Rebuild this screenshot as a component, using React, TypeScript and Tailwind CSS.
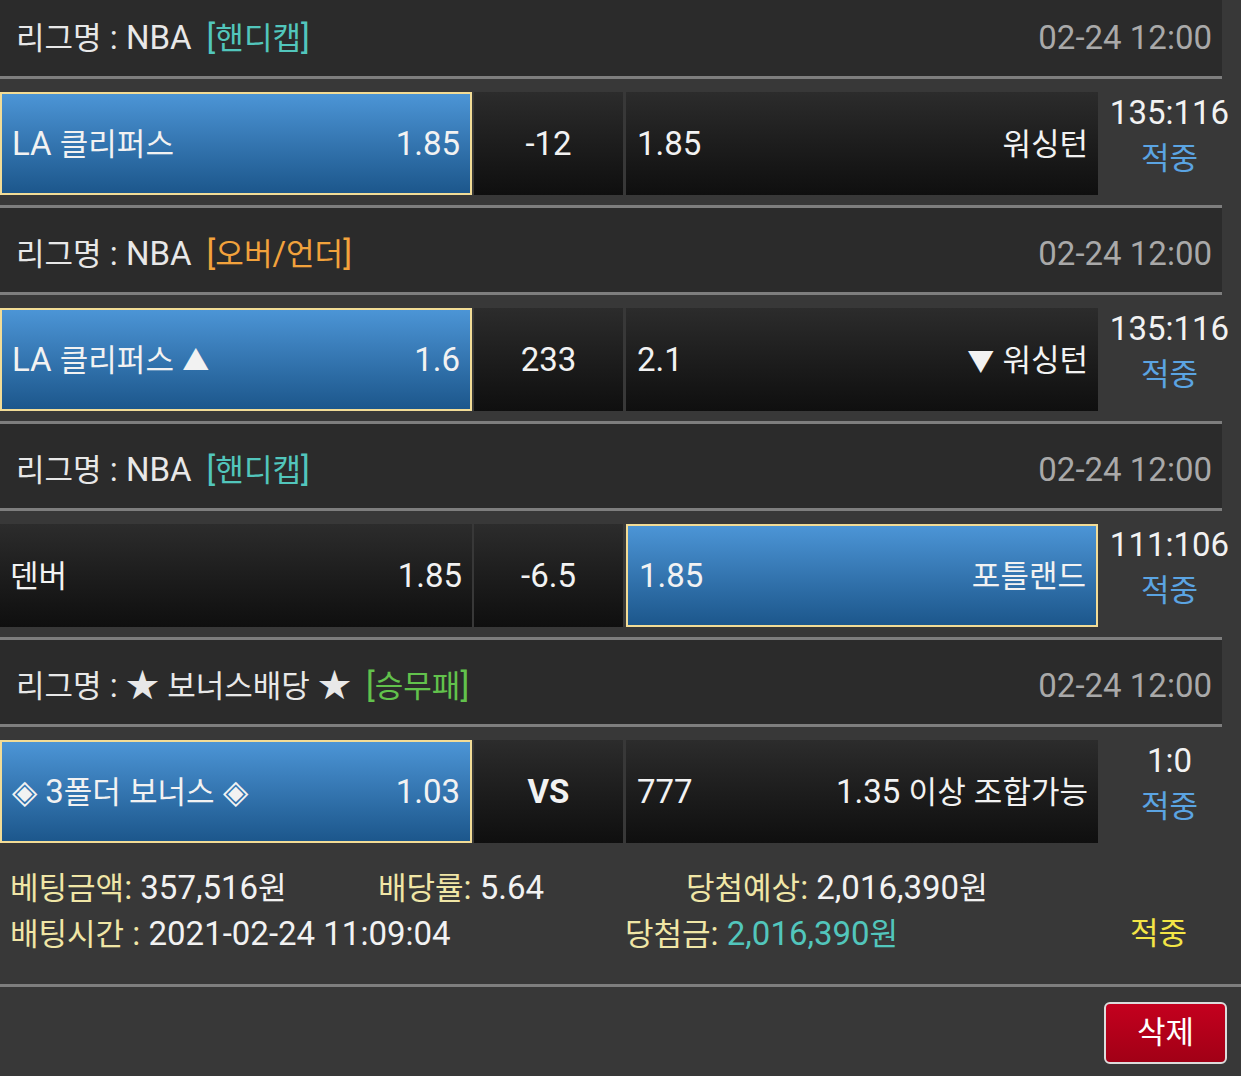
import React from "react";

const FONT = "font-['Roboto','Noto_Sans_CJK_KR',sans-serif]";

function t(s: string): React.ReactNode {
  const parts = s.split(/([\u3131-\uD79D]+|[▲▼])/);
  return parts.map((p, i) => {
    if (i % 2 === 0) return p;
    if (p === "▲" || p === "▼") return <span key={i} className="text-[27px]">{p}</span>;
    return <span key={i} className="text-[0.94em]">{p}</span>;
  });
}

function Header({ label, tag, tagColor, first }: { label: string; tag: string; tagColor: string; first?: boolean }) {
  return (
    <div className={`${first ? "-mt-[8px]" : ""} flex h-[84px] w-[1222px] items-center justify-between bg-[#2b2b2b] pl-[16px] pr-[10px] pt-[8px] text-[33px]`}>
      <div className="flex items-center text-[#e8e8e8]">
        <span>{t(label)}</span>
        <span className={`ml-[15px] ${tagColor}`}>{t(tag)}</span>
      </div>
      <span className="text-[#a9a9a9]">02-24 12:00</span>
    </div>
  );
}

function Line() {
  return <div className="h-[3px] w-[1222px] bg-[#7e7e7e]" />;
}

function Cell({ selected, left, right, className }: { selected?: boolean; left: string; right: string; className: string }) {
  const base = selected
    ? "border-2 border-[#f2dc96] bg-gradient-to-b from-[#4c95d6] to-[#1c578c]"
    : "bg-gradient-to-b from-[#2c2c2c] to-[#0f0f0f]";
  return (
    <div className={`mt-[13px] flex h-[103px] items-center justify-between text-[33px] text-[#f2f2f2] ${base} ${className}`}>
      <span>{t(left)}</span>
      <span>{t(right)}</span>
    </div>
  );
}

function Row({
  lSel,
  rSel,
  lName,
  lOdd,
  mid,
  rOdd,
  rName,
  score,
  midBold,
}: {
  lSel?: boolean;
  rSel?: boolean;
  lName: string;
  lOdd: string;
  mid: string;
  rOdd: string;
  rName: string;
  score: string;
  midBold?: boolean;
}) {
  return (
    <div className="flex h-[126px] w-full">
      <Cell selected={lSel} left={lName} right={lOdd} className="w-[472px] pl-[10px] pr-[10px]" />
      <div className={`ml-[2px] mt-[13px] flex h-[103px] w-[149px] items-center justify-center bg-gradient-to-b from-[#2c2c2c] to-[#0f0f0f] text-[33px] text-[#f2f2f2] ${midBold ? "font-bold" : ""}`}>
        {mid}
      </div>
      <Cell selected={rSel} left={rOdd} right={rName} className="ml-[3px] w-[472px] pl-[11px] pr-[10px]" />
      <div className="flex flex-1 flex-col items-center pt-[11px] text-[33px] leading-[46px]">
        <span className="text-[#f2f2f2]">{score}</span>
        <span className="text-[31px] text-[#5ba4e2]">적중</span>
      </div>
    </div>
  );
}

export default function App() {
  return (
    <div className={`${FONT} h-[1076px] w-[1241px] overflow-hidden bg-[#383838]`}>
      <Header first label="리그명 : NBA" tag="[핸디캡]" tagColor="text-[#52c6bc]" />
      <Line />
      <Row lSel lName="LA 클리퍼스" lOdd="1.85" mid="-12" rOdd="1.85" rName="워싱턴" score="135:116" />
      <Line />
      <Header label="리그명 : NBA" tag="[오버/언더]" tagColor="text-[#f2a23c]" />
      <Line />
      <Row lSel lName="LA 클리퍼스 ▲" lOdd="1.6" mid="233" rOdd="2.1" rName="▼ 워싱턴" score="135:116" />
      <Line />
      <Header label="리그명 : NBA" tag="[핸디캡]" tagColor="text-[#52c6bc]" />
      <Line />
      <Row rSel lName="덴버" lOdd="1.85" mid="-6.5" rOdd="1.85" rName="포틀랜드" score="111:106" />
      <Line />
      <Header label="리그명 : ★ 보너스배당 ★" tag="[승무패]" tagColor="text-[#62c24c]" />
      <Line />
      <Row lSel lName="◈ 3폴더 보너스 ◈" lOdd="1.03" mid="VS" midBold rOdd="777" rName="1.35 이상 조합가능" score="1:0" />

      <div className="pb-[27px] pl-[10px] pt-[12px] text-[33px] leading-[45px]">
        <div className="flex">
          <div className="w-[368px]">
            <span className="text-[#f0e6a6]">{t("베팅금액: ")}</span>
            <span className="text-[#f2f2f2]">{t("357,516원")}</span>
          </div>
          <div className="w-[308px]">
            <span className="text-[#f0e6a6]">{t("배당률: ")}</span>
            <span className="text-[#f2f2f2]">5.64</span>
          </div>
          <div>
            <span className="text-[#f0e6a6]">{t("당첨예상: ")}</span>
            <span className="text-[#f2f2f2]">{t("2,016,390원")}</span>
          </div>
        </div>
        <div className="flex">
          <div className="w-[615px]">
            <span className="text-[#f0e6a6]">{t("배팅시간 : ")}</span>
            <span className="text-[#f2f2f2]">2021-02-24 11:09:04</span>
          </div>
          <div className="w-[505px]">
            <span className="text-[#f0e6a6]">{t("당첨금: ")}</span>
            <span className="text-[#52c6bc]">{t("2,016,390원")}</span>
          </div>
          <div className="text-[31px] text-[#f3e546]">적중</div>
        </div>
      </div>
      <div className="h-[3px] w-full bg-[#7e7e7e]" />
      <div className="flex justify-end pr-[14px] pt-[15px]">
        <button className="flex h-[62px] w-[123px] items-center justify-center rounded-[6px] border-2 border-[#dcdcdc] bg-gradient-to-b from-[#c4001e] to-[#a10016] text-[31px] text-white">
          삭제
        </button>
      </div>
    </div>
  );
}
